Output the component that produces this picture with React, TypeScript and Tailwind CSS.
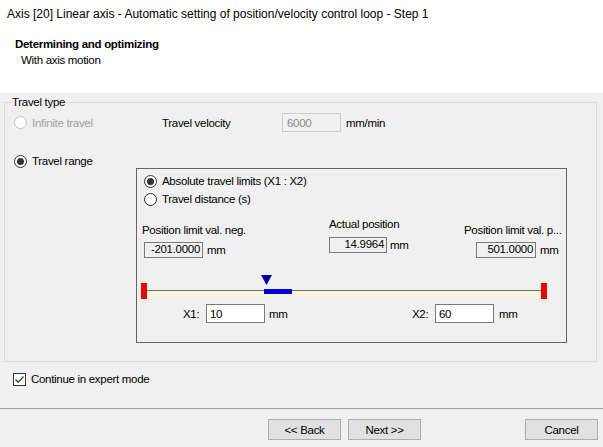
import React from 'react';

function Radio({ checked = false, disabled = false }: { checked?: boolean; disabled?: boolean }) {
  return (
    <span
      className={`flex h-[13px] w-[13px] shrink-0 items-center justify-center rounded-full border bg-white ${
        disabled ? 'border-[#c4c4c4]' : 'border-[#333333]'
      }`}
    >
      {checked && <span className="h-[7px] w-[7px] rounded-full bg-[#333333]" />}
    </span>
  );
}

function Field({ value, className = '' }: { value: string; className?: string }) {
  return (
    <div
      className={`flex items-center justify-end border border-[#7a7a7a] bg-[#f0f0f0] pr-[2px] leading-none ${className}`}
    >
      {value}
    </div>
  );
}

function Button({ label }: { label: string }) {
  return (
    <div className="flex h-[21px] w-[73px] items-center justify-center border border-[#adadad] bg-[#e1e1e1]">
      {label}
    </div>
  );
}

export default function App() {
  return (
    <div
      className="flex h-[447px] w-[603px] flex-col overflow-hidden bg-[#f0f0f0] text-[11.5px] leading-[14px] tracking-[-0.3px] text-black"
      style={{ fontFamily: '"Liberation Sans", Arial, sans-serif' }}
    >
      {/* header */}
      <div className="h-[93px] shrink-0 bg-white pl-[7px] pt-[7px]">
        <div className="text-[12px] tracking-normal">
          Axis [20] Linear axis - Automatic setting of position/velocity control loop - Step 1
        </div>
        <div className="mt-[16px] pl-[8px] font-bold">Determining and optimizing</div>
        <div className="mt-[2px] pl-[14px]">With axis motion</div>
      </div>

      {/* travel type group */}
      <div className="relative ml-[4px] mt-[9px] h-[260px] w-[593px] border border-[#dcdcdc]">
        <span className="absolute -top-[8px] left-[6px] bg-[#f0f0f0] px-[1px]">Travel type</span>

        <div className="mt-[10px] flex h-[19px] items-center">
          <div className="flex w-[157px] items-center pl-[9px] text-[#a0a0a0]">
            <Radio disabled />
            <span className="ml-[5px]">Infinite travel</span>
          </div>
          <div className="w-[120px]">Travel velocity</div>
          <div className="flex h-[19px] w-[59px] items-center border border-[#cccccc] pl-[4px] text-[#8c8c8c]">6000</div>
          <span className="ml-[5px]">mm/min</span>
        </div>

        <div className="mt-[22px] flex h-[14px] items-center pl-[9px]">
          <Radio checked />
          <span className="ml-[5px]">Travel range</span>
        </div>

        {/* travel range box */}
        <div className="ml-[131px] h-[175px] w-[431px] border border-[#646464]">
          <div className="pl-[7px] pt-[3px]">
            <div className="flex h-[18px] items-center">
              <Radio checked />
              <span className="ml-[5px]">Absolute travel limits (X1 : X2)</span>
            </div>
            <div className="flex h-[18px] items-center">
              <Radio />
              <span className="ml-[5px]">Travel distance (s)</span>
            </div>
          </div>

          <div className="flex">
            <div className="ml-[5px] w-[187px] pt-[15px]">
              <div>Position limit val. neg.</div>
              <div className="ml-[2px] mt-[5px] flex items-center">
                <Field value="-201.0000" className="h-[16px] w-[59px]" />
                <span className="ml-[4px]">mm</span>
              </div>
            </div>
            <div className="w-[135px] pt-[9px]">
              <div>Actual position</div>
              <div className="mt-[6px] flex items-center">
                <Field value="14.9964" className="h-[16px] w-[58px]" />
                <span className="ml-[3px]">mm</span>
              </div>
            </div>
            <div className="w-[96px] pt-[15px]">
              <div className="whitespace-nowrap">Position limit val. p...</div>
              <div className="ml-[12px] mt-[5px] flex items-center">
                <Field value="501.0000" className="h-[16px] w-[60px]" />
                <span className="ml-[4px]">mm</span>
              </div>
            </div>
          </div>

          {/* slider */}
          <svg width="429" height="30" className="mt-[14px] block">
            <rect x="10" y="18" width="394" height="7" fill="#f7f3de" />
            <rect x="10" y="18" width="394" height="1" fill="#6e6e6e" />
            <rect x="4" y="11" width="6" height="16" fill="#ee0000" />
            <rect x="404" y="11" width="6" height="16" fill="#ee0000" />
            <rect x="127" y="17" width="28" height="5" fill="#0000dd" />
            <polygon points="124,3 135,3 129.5,13" fill="#0000a8" />
          </svg>

          <div className="mt-[2px] flex h-[19px] items-center">
            <div className="ml-[46px] w-[23px]">X1:</div>
            <div className="flex h-[19px] w-[59px] items-center border border-[#7a7a7a] bg-white pl-[3px]">10</div>
            <span className="w-[147px] pl-[4px]">mm</span>
            <div className="w-[23px]">X2:</div>
            <div className="flex h-[19px] w-[59px] items-center border border-[#7a7a7a] bg-white pl-[3px]">60</div>
            <span className="pl-[5px]">mm</span>
          </div>
        </div>
      </div>

      {/* expert mode */}
      <div className="ml-[13px] mt-[10px] flex items-center">
        <span className="flex h-[13px] w-[13px] items-center justify-center border border-[#333333] bg-white">
          <svg width="11" height="11" viewBox="0 0 11 11">
            <path d="M1.5 5.5 L4.2 8.2 L9.5 2.5" fill="none" stroke="#333333" strokeWidth="1.2" />
          </svg>
        </span>
        <span className="ml-[5px]">Continue in expert mode</span>
      </div>

      {/* footer */}
      <div className="mt-[22px] border-t border-[#a0a0a0]" />
      <div className="mt-[10px] flex">
        <div className="ml-[268px]">
          <Button label="<< Back" />
        </div>
        <div className="ml-[7px]">
          <Button label="Next >>" />
        </div>
        <div className="ml-[104px]">
          <Button label="Cancel" />
        </div>
      </div>
    </div>
  );
}
